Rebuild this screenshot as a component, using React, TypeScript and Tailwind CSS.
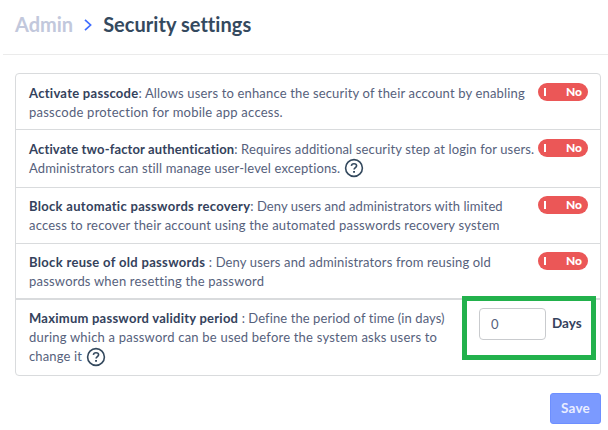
import React, { useState } from 'react';

function HelpIcon({ className = '' }: { className?: string }) {
  return (
    <svg viewBox="0 0 20 20" className={`absolute h-5 w-5 ${className}`} fill="none" stroke="#34495e" strokeWidth="1.6">
      <circle cx="10" cy="10" r="8.4" />
      <path d="M7.4 7.9C7.5 6.5 8.5 5.7 10 5.7s2.6.8 2.6 2.1c0 1.8-2.5 1.9-2.5 3.8" />
      <path d="M9.1 13.9h1.9" strokeWidth="1.8" />
    </svg>
  );
}

function Toggle() {
  const [on, setOn] = useState(false);

  return (
    <button
      onClick={() => setOn(!on)}
      className={`flex h-[18px] w-[50px] items-center justify-between rounded-full pr-[6px] pl-[6px] text-[12px] leading-[18px] font-black text-white ${on ? 'bg-green-500' : 'bg-[#eb5757]'}`}
    >
      <span className="h-[8px] w-[2px] bg-white" />
      <span>{on ? 'Yes' : 'No'}</span>
    </button>
  );
}

const settings = [
  {
    title: 'Activate passcode',
    titleClass: 'tracking-[0.28px]',
    lines: [
      { text: ': Allows users to enhance the security of their account by enabling', className: 'tracking-[0.16px]' },
      { text: 'passcode protection for mobile app access.', className: 'tracking-[0.24px]' },
    ],
    rowClass: 'h-[56px] pt-[10px]',
    toggleClass: 'mt-[-1px]',
    help: false,
  },
  {
    title: 'Activate two-factor authentication',
    titleClass: 'tracking-[0.14px]',
    lines: [
      { text: ': Requires additional security step at login for users.', className: 'tracking-[0.14px]' },
      { text: 'Administrators can still manage user-level exceptions.', className: 'tracking-[0.14px]' },
    ],
    rowClass: 'h-[58px] pt-[10px]',
    toggleClass: 'mt-[-1px]',
    help: true,
  },
  {
    title: 'Block automatic passwords recovery',
    titleClass: 'tracking-[0.3px]',
    lines: [
      { text: ': Deny users and administrators with limited', className: 'tracking-[0.06px]' },
      { text: 'access to recover their account using the automated passwords recovery system', className: 'tracking-[0.2px]' },
    ],
    rowClass: 'h-[56px] pt-[9px]',
    toggleClass: 'mt-[-1px]',
    help: false,
  },
  {
    title: 'Block reuse of old passwords',
    titleClass: 'tracking-[0.32px]',
    lines: [
      { text: ' : Deny users and administrators from reusing old', className: 'tracking-[0.14px]' },
      { text: 'passwords when resetting the password', className: 'tracking-[0.2px]' },
    ],
    rowClass: 'h-[56px] border-b-2 pt-[9px]',
    toggleClass: 'mt-[-1px]',
    help: false,
  },
];

function App() {
  const [days, setDays] = useState('0');

  return (
    <div className="h-[430px] w-[608px] overflow-hidden bg-white font-['Lato',sans-serif] text-[13px] leading-[19px] text-[#56617c]">
      <header className="ml-[3px] flex h-[55px] items-center border-b border-[#ebebeb] pb-[6px] pl-[12px] text-[20px] font-bold whitespace-pre">
        <span className="text-[#c2c8dc]">Admin</span>
        <svg viewBox="0 0 8 12" className="mt-[2px] mr-[11px] ml-[11px] h-[12px] w-[8px]" fill="none" stroke="#3f6dff" strokeWidth="1.7">
          <path d="M1 .8L6.6 6 1 11.2" />
        </svg>
        <h1 className="tracking-[0.04px] text-[#34495e]">Security settings</h1>
      </header>

      <main className="mt-[18px] ml-[15px] w-[586px]">
        <div className="h-[303px] rounded-[4px] border border-[#d9dbdd]">
          {settings.map((item) => (
            <div key={item.title} className={`flex items-start justify-between border-b border-[#d9dbdd] pr-[12px] pl-[13px] ${item.rowClass}`}>
              <div className="w-[509px] whitespace-pre">
                <p>
                  <strong className={`font-bold text-[#34425c] ${item.titleClass}`}>{item.title}</strong>
                  <span className={item.lines[0].className}>{item.lines[0].text}</span>
                </p>
                <p>
                  <span className={`relative ${item.lines[1].className}`}>
                    {item.lines[1].text}
                    {item.help && <HelpIcon className="top-[-2px] left-[calc(100%+4px)]" />}
                  </span>
                </p>
              </div>
              <div className={`shrink-0 ${item.toggleClass}`}>
                <Toggle />
              </div>
            </div>
          ))}

          <div className="flex items-start justify-between pr-[4px] pl-[13px]">
            <div className="mt-[9px] w-[420px] whitespace-pre">
              <p>
                <strong className="font-bold tracking-[0.24px] text-[#34425c]">Maximum password validity period</strong>
                <span className="tracking-[0.08px]"> : Define the period of time (in days)</span>
              </p>
              <p className="tracking-[0.21px]">during which a password can be used before the system asks users to</p>
              <p>
                <span className="relative tracking-[0.15px]">
                  change it
                  <HelpIcon className="top-[-1px] left-[calc(100%+4px)]" />
                </span>
              </p>
            </div>
            <div className="relative mt-[-4px] flex h-[64px] w-[134px] items-start border-5 border-[#22b14c] bg-white pt-[7px] pl-[12px]">
              <input
                value={days}
                onChange={(e) => setDays(e.target.value)}
                className="h-[32px] w-[67px] rounded-[4px] border border-[#c9cbce] pl-[11px] outline-none"
              />
              <span className="mt-[6px] ml-[6px] text-[13.5px] font-bold text-[#34425c]">Days</span>
            </div>
          </div>
        </div>

        <div className="mt-[17px] flex justify-end">
          <button className="h-[31px] w-[51px] rounded-[3px] border border-[#6d8fff] bg-[#7b9aff] text-[13.5px] font-bold tracking-[0.2px] text-[#e9edff]">Save</button>
        </div>
      </main>
    </div>
  );
}

export default App;
